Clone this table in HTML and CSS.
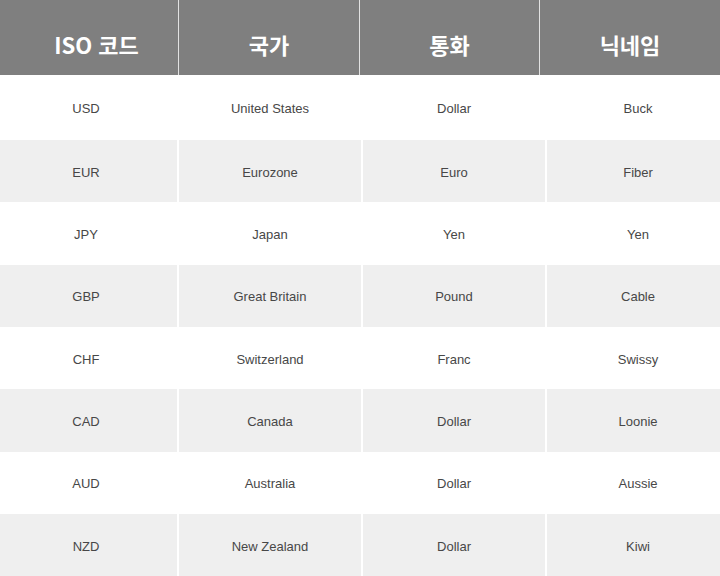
FILE: index.html
```html
<!DOCTYPE html>
<html lang="ko">
<head>
<meta charset="utf-8">
<title>통화 닉네임</title>
<link rel="stylesheet" href="styles.css">
</head>
<body>
<div class="page">
  <div class="thead">
    <div class="th th-first">ISO 코드</div>
    <div class="th">국가</div>
    <div class="th">통화</div>
    <div class="th">닉네임</div>
  </div>
  <div class="tbody">
    <div class="row row-first"><div class="td">USD</div><div class="td">United States</div><div class="td">Dollar</div><div class="td">Buck</div></div>
    <div class="row alt"><div class="td">EUR</div><div class="td">Eurozone</div><div class="td">Euro</div><div class="td">Fiber</div></div>
    <div class="row"><div class="td">JPY</div><div class="td">Japan</div><div class="td">Yen</div><div class="td">Yen</div></div>
    <div class="row alt"><div class="td">GBP</div><div class="td">Great Britain</div><div class="td">Pound</div><div class="td">Cable</div></div>
    <div class="row"><div class="td">CHF</div><div class="td">Switzerland</div><div class="td">Franc</div><div class="td">Swissy</div></div>
    <div class="row alt"><div class="td">CAD</div><div class="td">Canada</div><div class="td">Dollar</div><div class="td">Loonie</div></div>
    <div class="row"><div class="td">AUD</div><div class="td">Australia</div><div class="td">Dollar</div><div class="td">Aussie</div></div>
    <div class="row alt"><div class="td">NZD</div><div class="td">New Zealand</div><div class="td">Dollar</div><div class="td">Kiwi</div></div>
  </div>
</div>
</body>
</html>
```

FILE: styles.css
```css
html, body {
  margin: 0;
  padding: 0;
  background: #ffffff;
}

.page {
  width: 720px;
  height: 576px;
  overflow: hidden;
}

.thead {
  display: grid;
  grid-template-columns: 178px 180px 179px 1fr;
  column-gap: 1px;
  height: 75px;
  background: #e2e2e2;
}

.th {
  background: #7f7f7f;
  color: #ffffff;
  font-family: "Noto Sans CJK KR", "Noto Sans", sans-serif;
  font-weight: 700;
  font-size: 22px;
  display: flex;
  align-items: center;
  justify-content: center;
  padding-top: 12px;
  box-sizing: border-box;
}

.th-first {
  padding-left: 15px;
}

.tbody {
  display: flex;
  flex-direction: column;
  margin-left: -5px;
  width: 734px;
}

.row {
  display: grid;
  grid-template-columns: repeat(4, 182px);
  column-gap: 2px;
  height: 62.33px;
}

.row-first {
  height: 65px;
}

.td {
  display: flex;
  align-items: center;
  justify-content: center;
  font-family: "Liberation Sans", Arial, sans-serif;
  font-size: 13px;
  color: #474747;
  padding-top: 2px;
  box-sizing: border-box;
}

.row.alt .td {
  background: #efefef;
}
```
